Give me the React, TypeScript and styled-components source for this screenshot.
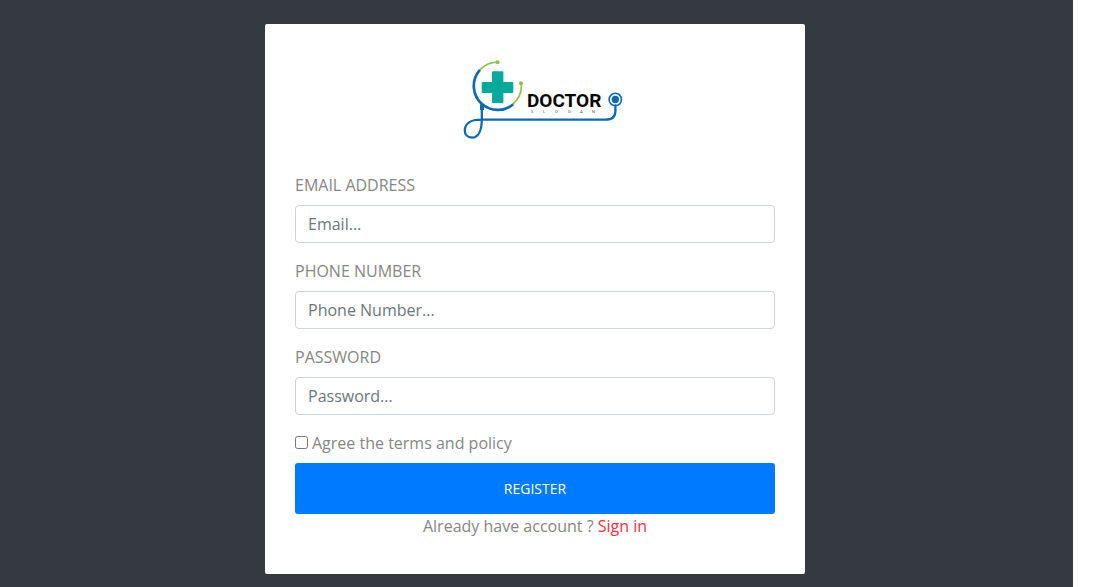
import React from 'react';
import styled, { createGlobalStyle } from 'styled-components';

const GlobalStyle = createGlobalStyle`
  *, *::before, *::after { box-sizing: border-box; }
  body {
    margin: 0;
    background: #fff;
    color: #868686;
    font-family: 'Open Sans', sans-serif;
    font-size: 16px;
    line-height: 24px;
  }
`;

const Page = styled.main`
  display: flex;
  justify-content: center;
  align-items: flex-start;
  min-height: 100vh;
  margin-right: 28px;
  padding: 24px 3px 12px 0;
  background: #343a40;
`;

const Card = styled.form`
  width: 100%;
  max-width: 540px;
  padding: 30px 30px 36px;
  background: #fff;
  border-radius: 2px;
`;

const Brand = styled.div`
  display: flex;
  justify-content: center;
  margin-bottom: 29px;
`;

const Field = styled.div`
  display: flex;
  flex-direction: column;
  gap: 8px;
  margin-bottom: 16px;
`;

const Label = styled.label`
  text-transform: uppercase;
`;

const Input = styled.input`
  width: 100%;
  height: 38px;
  padding: 6px 12px;
  border: 1px solid #ced4da;
  border-radius: 4px;
  background: #fff;
  color: #495057;
  font: inherit;
  &::placeholder { color: #6c757d; opacity: 1; }
`;

const Agreement = styled.label`
  display: flex;
  align-items: center;
  gap: 4px;
  margin-bottom: 8px;
`;

const Checkbox = styled.input`
  width: 13px;
  height: 13px;
  margin: 0 0 2px;
`;

const SubmitButton = styled.button`
  display: block;
  width: 100%;
  padding: 15px 12px;
  border: 0;
  border-radius: 3px;
  background: #007bff;
  color: #fff;
  font-family: inherit;
  font-size: 14px;
  line-height: 21px;
  text-transform: uppercase;
  cursor: pointer;
`;

const Footer = styled.p`
  margin: 0;
  text-align: center;
`;

const SignInLink = styled.a`
  color: #ff2e44;
  text-decoration: none;
`;

const Wordmark = styled.text`
  fill: #080808;
  font: 700 19px Roboto, sans-serif;
`;

const Slogan = styled.text`
  fill: #555;
  font: 400 4px Roboto, sans-serif;
`;

const Logo = () => (
  <svg width="180" height="90" viewBox="0 0 180 90" role="img" aria-label="Doctor">
    <g fill="none" strokeLinecap="round">
      <path d="M34.5 16.2A24 24 0 0 1 52.3 8.2M76.2 29.3A24 24 0 0 1 67.3 50.6" stroke="#8fbe4a" strokeWidth="1.6" />
      <path d="M34.3 16.7A24 24 0 0 0 37.3 50.3A24 24 0 0 0 67.3 51" stroke="#0d69b1" strokeWidth="2.7" />
      <path d="M36.8 51V65C36.8 76 33.5 83.6 27 83.6C22.5 83.6 19.8 80.5 19.8 76.5C19.8 69.5 26 65.7 36 65.7H160.500C167 65.7 170.4 62.5 170.4 57V51.5" stroke="#0d69b1" strokeWidth="2.3" />
      <circle cx="170.3" cy="45.5" r="6.2" stroke="#0d69b1" strokeWidth="1.6" />
    </g>
    <path d="M35 50l4 2v4h-4z" fill="#0d69b1" />
    <circle cx="170.3" cy="45.5" r="3.7" fill="#0d69b1" />
    <circle cx="52.5" cy="8.3" r="2" fill="#8fbe4a" />
    <circle cx="76" cy="29.3" r="2" fill="#8fbe4a" />
    <path d="M48 17.3h9.4q1 0 1 1V28h8.9q1 0 1 1v9q0 1-1 1h-8.9v9q0 1-1 1H48q-1 0-1-1v-9h-9.3q-1 0-1-1v-9q0-1 1-1H47v-9.700q0-1 1-1z" fill="#07a99c" />
    <Wordmark x="82" y="53">DOCTOR</Wordmark>
    <Slogan x="86 98 110 123 135 147" y="59">SLOGAN</Slogan>
  </svg>
);

const fields = [
  { id: 'email', label: 'Email Address', type: 'email', placeholder: 'Email...' },
  { id: 'phone', label: 'Phone Number', type: 'tel', placeholder: 'Phone Number...' },
  { id: 'password', label: 'Password', type: 'password', placeholder: 'Password...' },
];

export default function App() {
  return (
    <>
      <GlobalStyle />
      <Page>
        <Card onSubmit={(event: React.FormEvent) => event.preventDefault()}>
          <Brand>
            <Logo />
          </Brand>
          {fields.map(({ id, label, type, placeholder }) => (
            <Field key={id}>
              <Label htmlFor={id}>{label}</Label>
              <Input id={id} name={id} type={type} placeholder={placeholder} />
            </Field>
          ))}
          <Agreement>
            <Checkbox type="checkbox" name="terms" />
            Agree the terms and policy
          </Agreement>
          <SubmitButton type="submit">Register</SubmitButton>
          <Footer>
            Already have account ? <SignInLink href="#signin">Sign in</SignInLink>
          </Footer>
        </Card>
      </Page>
    </>
  );
}
